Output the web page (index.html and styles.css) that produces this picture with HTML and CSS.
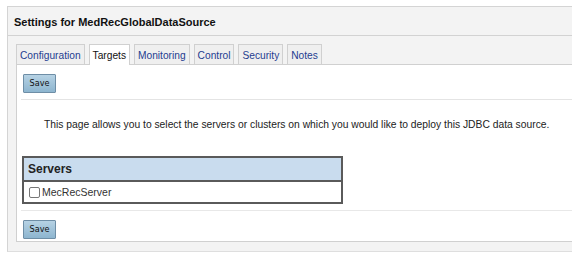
FILE: index.html
```html
<!DOCTYPE html>
<html>
<head>
<meta charset="utf-8">
<link rel="stylesheet" href="styles.css">
</head>
<body>
<div class="panel">
  <div class="panel-title">Settings for MedRecGlobalDataSource</div>
  <div class="tabs">
    <div class="tab">Configuration</div>
    <div class="tab active">Targets</div>
    <div class="tab">Monitoring</div>
    <div class="tab">Control</div>
    <div class="tab">Security</div>
    <div class="tab">Notes</div>
  </div>
  <div class="content">
    <div class="bar"><button class="btn">Save</button></div>
    <p class="intro">This page allows you to select the servers or clusters on which you would like to deploy this JDBC data source.</p>
    <table class="servers">
      <thead><tr><th>Servers</th></tr></thead>
      <tbody><tr><td><label class="item"><span class="check"></span>MecRecServer</label></td></tr></tbody>
    </table>
    <div class="bar bottom"><button class="btn">Save</button></div>
  </div>
</div>
</body>
</html>
```
FILE: styles.css
```css
html, body {
  margin: 0;
  padding: 0;
  background: #ffffff;
  font-family: "Liberation Sans", Arial, sans-serif;
  color: #222;
}
body {
  padding: 6px 5px 0 7px;
}
.panel {
  width: 565px;
  height: 246px;
  box-sizing: border-box;
  background: #f3f3f3;
  border: 1px solid #d4d4d4;
  border-right: none;
  border-bottom-color: #dedede;
}
.panel-title {
  height: 29px;
  box-sizing: border-box;
  padding: 9px 0 0 6px;
  font-size: 11px;
  font-weight: bold;
  color: #111;
  border-bottom: 1px solid #d2d2d2;
}
.tabs {
  display: flex;
  gap: 4px;
  padding: 8px 0 0 8px;
  align-items: flex-end;
}
.tab {
  height: 20px;
  box-sizing: border-box;
  padding: 5px 3px 0 3px;
  font-size: 10.2px;
  color: #1f3d8f;
  background: #efefef;
  border: 1px solid #d0d0d0;
  border-bottom: none;
}
.tab.active {
  background: #fff;
  color: #111;
  height: 21px;
  margin-bottom: -1px;
  position: relative;
  z-index: 1;
}
.content {
  margin-left: 8px;
  height: 178px;
  box-sizing: border-box;
  background: #fff;
  border: 1px solid #d0d0d0;
  border-right: none;
  padding: 7px 0 0 4px;
}
.bar {
  height: 27px;
  border-bottom: 1px solid #e4e4e4;
  padding-left: 2px;
}
.bar.bottom {
  border-bottom: none;
  border-top: 1px solid #e8e8e8;
  margin-top: 6px;
  padding-top: 7px;
}
.btn {
  width: 33px;
  height: 19px;
  padding: 0;
  font-family: "DejaVu Sans Condensed", "Liberation Sans", sans-serif;
  font-size: 9px;
  color: #111;
  background: linear-gradient(#b6d2e4, #8db5cf);
  border: 1px solid #6e8ea6;
  border-radius: 1px;
}
.intro {
  margin: 0;
  padding: 19px 0 0 23px;
  height: 37px;
  font-size: 10.3px;
  color: #222;
}
.servers {
  margin-left: 1px;
  width: 321px;
  border-collapse: collapse;
  border: 2px solid #5a5a5a;
}
.servers th {
  height: 22px;
  padding: 0 0 0 4px;
  text-align: left;
  font-size: 12px;
  font-weight: bold;
  color: #222;
  background: #c9dcee;
  border-bottom: 2px solid #5a5a5a;
}
.servers td {
  height: 20px;
  padding: 0 0 0 5px;
  font-size: 10.5px;
  color: #333;
}
.item {
  display: flex;
  align-items: center;
}
.check {
  width: 9px;
  height: 9px;
  border: 1px solid #777;
  border-radius: 2px;
  background: #fff;
  margin-right: 2px;
}
```
